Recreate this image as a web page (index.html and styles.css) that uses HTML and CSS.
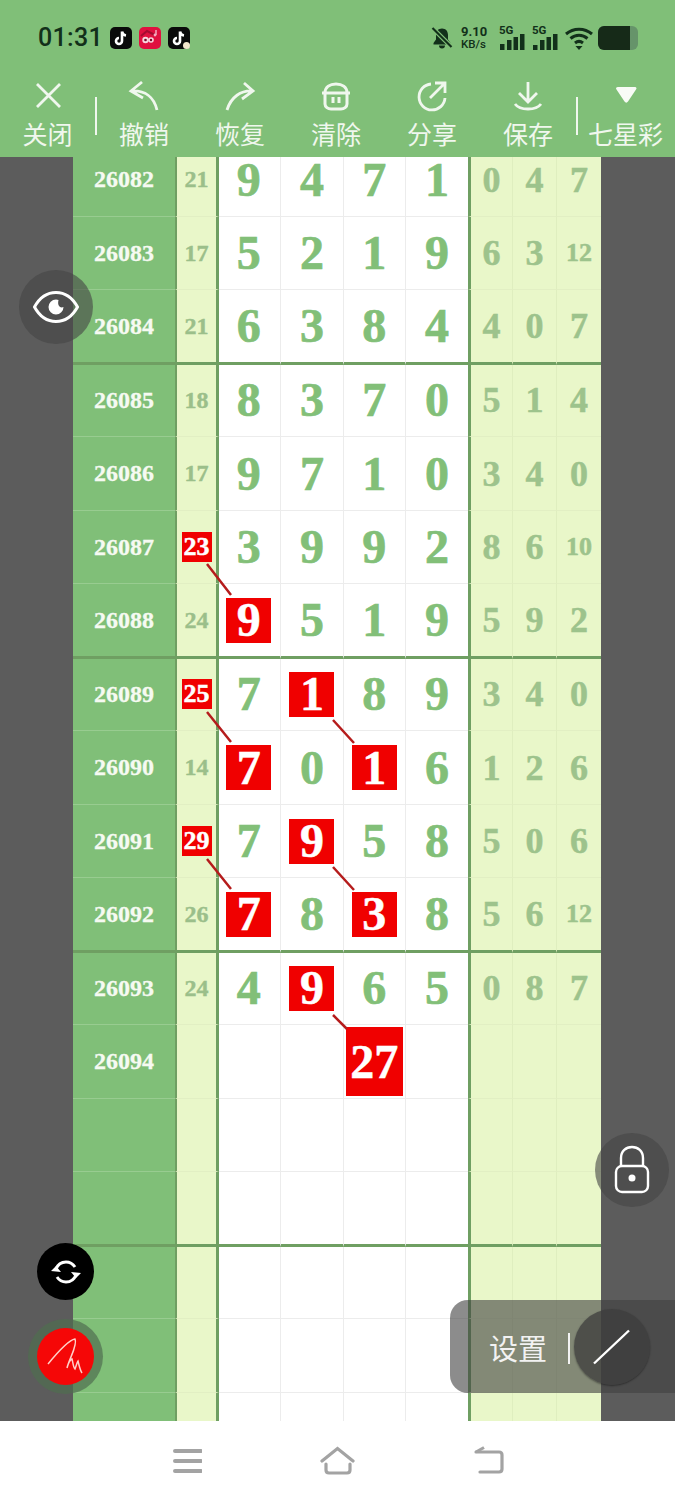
FILE: index.html
```html
<!DOCTYPE html>
<html>
<head>
<meta charset="UTF-8">
<title>七星彩</title>
<link rel="stylesheet" href="styles.css">
</head>
<body>
<div class="phone">
	<div class="statusBar">
		<div class="statusLeft">
			<span class="clock">01:31</span>
			<svg class="appIcon" viewBox="0 0 22 22"><rect width="22" height="22" rx="5" fill="#0a0a0a"/><path d="M12 4.500v9.500a3 3 0 1 1-3-3M12 4.500c.3 2.400 1.700 3.700 4 4" fill="none" stroke="#fff" stroke-width="2.600"/></svg>
			<svg class="appIcon" viewBox="0 0 22 22"><rect width="22" height="22" rx="5" fill="#e0103f"/><path d="M2 9l6-5 8 4" fill="none" stroke="#a50a30" stroke-width="2"/><circle cx="6.500" cy="13" r="3.200" fill="#f7d7de"/><circle cx="12" cy="13" r="2.800" fill="#f7d7de"/><circle cx="6.500" cy="13" r="1.300" fill="#7a0a26"/><circle cx="12" cy="13" r="1.200" fill="#7a0a26"/><path d="M17 3v5" stroke="#f3a9bd" stroke-width="1.500"/><circle cx="16" cy="8" r="1.400" fill="#f3a9bd"/></svg>
			<svg class="appIcon" viewBox="0 0 22 22"><rect width="22" height="22" rx="5" fill="#0a0a0a"/><path d="M12 4.500v9.500a3 3 0 1 1-3-3M12 4.500c.3 2.400 1.700 3.700 4 4" fill="none" stroke="#fff" stroke-width="2.600"/><circle cx="18.500" cy="18.500" r="3.500" fill="#f2e6cc"/></svg>
		</div>
		<div class="statusRight">
			<svg class="bell" viewBox="0 0 22 22"><path d="M11 1.500c-3.800 0-6 2.800-6 6.500v4.500L2.500 16v1.500h17V16L17 12.500V8c0-3.700-2.200-6.500-6-6.500zM8 18.500a3 3 0 0 0 6 0z" fill="#12301a"/><path d="M1.500 1l19 19" stroke="#80bf78" stroke-width="4.500"/><path d="M1.500 1l19 19" stroke="#12301a" stroke-width="2.200"/></svg>
			<div class="speed"><span>9.10</span><span class="unit">KB/s</span></div>
			<div class="signal">
				<span class="netName">5G</span>
				<svg viewBox="0 0 26 16"><path d="M1 10h4.500v6H1zM8 6h4.500v10H8zM14.500 3H19v13h-4.500zM21 0h4.500v16H21z" fill="#12301a"/></svg>
			</div>
			<div class="signal">
				<span class="netName">5G</span>
				<svg viewBox="0 0 26 16"><path d="M1 11h4.500v5H1zM8 6h4.500v10H8zM14.500 3H19v13h-4.500zM21 0h4.500v16H21z" fill="#12301a"/></svg>
			</div>
			<svg class="wifi" viewBox="0 0 28 24"><g fill="none" stroke="#12301a" stroke-width="3"><path d="M1 8c7.500-6.500 18.500-6.500 26 0"/><path d="M5.500 12.500c5-4.300 12-4.300 17 0"/><path d="M10 17c2.500-2 5.500-2 8 0"/></g><path d="M10.500 20h7L14 24z" fill="#12301a"/></svg>
			<div class="battery"><div class="batteryLevel"></div></div>
		</div>
	</div>

	<div class="toolbar">
		<div class="tool">
			<svg viewBox="0 0 32 32"><path d="M5 4l23 23M28 4L5 27" fill="none" stroke="#f0f7ee" stroke-width="2.800"/></svg>
			<span>关闭</span>
		</div>
		<div class="toolSep"></div>
		<div class="tool">
			<svg viewBox="0 0 32 32"><path d="M14 2L3 11l12 7M3 11c14-1 23 6 26 19" fill="none" stroke="#f0f7ee" stroke-width="2.800"/></svg>
			<span>撤销</span>
		</div>
		<div class="tool">
			<svg viewBox="0 0 32 32"><path d="M20 3l9 8-11 8M29 11C17 10 7 17 3 30" fill="none" stroke="#f0f7ee" stroke-width="2.800"/></svg>
			<span>恢复</span>
		</div>
		<div class="tool">
			<svg viewBox="0 0 32 32"><g fill="none" stroke="#f0f7ee" stroke-width="3"><path d="M5 13C5 7 10 4 16 4s11 3 11 9"/><path d="M2 13h28"/><path d="M5 13v11c0 3 3 5 6 5h10c3 0 6-2 6-5V13"/><path d="M13 17v6M19 17v6"/></g></svg>
			<span>清除</span>
		</div>
		<div class="tool">
			<svg viewBox="0 0 32 32"><g fill="none" stroke="#f0f7ee" stroke-width="2.800"><path d="M15 4a13 13 0 1 0 14 14"/><path d="M14 18L28 4M19 3h10v10"/></g></svg>
			<span>分享</span>
		</div>
		<div class="tool">
			<svg viewBox="0 0 32 32"><g fill="none" stroke="#f0f7ee" stroke-width="2.800"><path d="M16 2v19M7 13l9 9 9-9"/><path d="M3 24c3 4 8 5 13 5s10-1 13-5"/></g></svg>
			<span>保存</span>
		</div>
		<div class="toolSep lastSep"></div>
		<div class="tool">
			<svg viewBox="0 0 32 32"><path d="M8 7h17c1.500 0 2 1.500 1 2.500l-8 12c-1 1.500-2.500 1.500-3.500 0l-8-12C5.500 8.500 6 7 8 7z" fill="#f8fbf6"/></svg>
			<span>七星彩</span>
		</div>
	</div>

	<div class="sheet">
		<div class="table">
			<div class="row top"><div class="id">26082</div><div class="sum">21</div><div class="num">9</div><div class="num">4</div><div class="num">7</div><div class="num">1</div><div class="tail first">0</div><div class="tail">4</div><div class="tail">7</div></div>
			<div class="row"><div class="id">26083</div><div class="sum">17</div><div class="num">5</div><div class="num">2</div><div class="num">1</div><div class="num">9</div><div class="tail first">6</div><div class="tail">3</div><div class="tail wide">12</div></div>
			<div class="row end"><div class="id">26084</div><div class="sum">21</div><div class="num">6</div><div class="num">3</div><div class="num">8</div><div class="num">4</div><div class="tail first">4</div><div class="tail">0</div><div class="tail">7</div></div>
			<div class="row"><div class="id">26085</div><div class="sum">18</div><div class="num">8</div><div class="num">3</div><div class="num">7</div><div class="num">0</div><div class="tail first">5</div><div class="tail">1</div><div class="tail">4</div></div>
			<div class="row"><div class="id">26086</div><div class="sum">17</div><div class="num">9</div><div class="num">7</div><div class="num">1</div><div class="num">0</div><div class="tail first">3</div><div class="tail">4</div><div class="tail">0</div></div>
			<div class="row"><div class="id">26087</div><div class="sum"><b class="hitSum">23</b></div><div class="num">3</div><div class="num">9</div><div class="num">9</div><div class="num">2</div><div class="tail first">8</div><div class="tail">6</div><div class="tail wide">10</div></div>
			<div class="row end"><div class="id">26088</div><div class="sum">24</div><div class="num"><b class="hit">9</b></div><div class="num">5</div><div class="num">1</div><div class="num">9</div><div class="tail first">5</div><div class="tail">9</div><div class="tail">2</div></div>
			<div class="row"><div class="id">26089</div><div class="sum"><b class="hitSum">25</b></div><div class="num">7</div><div class="num"><b class="hit">1</b></div><div class="num">8</div><div class="num">9</div><div class="tail first">3</div><div class="tail">4</div><div class="tail">0</div></div>
			<div class="row"><div class="id">26090</div><div class="sum">14</div><div class="num"><b class="hit">7</b></div><div class="num">0</div><div class="num"><b class="hit">1</b></div><div class="num">6</div><div class="tail first">1</div><div class="tail">2</div><div class="tail">6</div></div>
			<div class="row"><div class="id">26091</div><div class="sum"><b class="hitSum">29</b></div><div class="num">7</div><div class="num"><b class="hit">9</b></div><div class="num">5</div><div class="num">8</div><div class="tail first">5</div><div class="tail">0</div><div class="tail">6</div></div>
			<div class="row end"><div class="id">26092</div><div class="sum">26</div><div class="num"><b class="hit">7</b></div><div class="num">8</div><div class="num"><b class="hit">3</b></div><div class="num">8</div><div class="tail first">5</div><div class="tail">6</div><div class="tail wide">12</div></div>
			<div class="row"><div class="id">26093</div><div class="sum">24</div><div class="num">4</div><div class="num"><b class="hit">9</b></div><div class="num">6</div><div class="num">5</div><div class="tail first">0</div><div class="tail">8</div><div class="tail">7</div></div>
			<div class="row"><div class="id">26094</div><div class="sum"></div><div class="num"></div><div class="num"></div><div class="num"><b class="hitBig">27</b></div><div class="num"></div><div class="tail first"></div><div class="tail"></div><div class="tail"></div></div>
			<div class="row"><div class="id"></div><div class="sum"></div><div class="num"></div><div class="num"></div><div class="num"></div><div class="num"></div><div class="tail first"></div><div class="tail"></div><div class="tail"></div></div>
			<div class="row end"><div class="id"></div><div class="sum"></div><div class="num"></div><div class="num"></div><div class="num"></div><div class="num"></div><div class="tail first"></div><div class="tail"></div><div class="tail"></div></div>
			<div class="row"><div class="id"></div><div class="sum"></div><div class="num"></div><div class="num"></div><div class="num"></div><div class="num"></div><div class="tail first"></div><div class="tail"></div><div class="tail"></div></div>
			<div class="row"><div class="id"></div><div class="sum"></div><div class="num"></div><div class="num"></div><div class="num"></div><div class="num"></div><div class="tail first"></div><div class="tail"></div><div class="tail"></div></div>
			<div class="row bottom"><div class="id"></div><div class="sum"></div><div class="num"></div><div class="num"></div><div class="num"></div><div class="num"></div><div class="tail first"></div><div class="tail"></div><div class="tail"></div></div>
		</div>
		<svg class="links" viewBox="0 157 675 1264">
			<path d="M207 564L231 595M207 712L231 742M333 720L354 743M207 859L231 889M333 867L354 890M333 1015L347 1029"/>
		</svg>
	</div>

	<div class="floatBtn eyeBtn">
		<svg viewBox="0 0 46 34" width="46" height="34"><path d="M1.500 17C7 7 14 2.500 23 2.500S39 7 44.500 17C39 27 32 31.500 23 31.500S7 27 1.500 17z" fill="none" stroke="#fff" stroke-width="3"/><path d="M23 9.500a7.500 7.500 0 1 0 7.500 7.500c-3 1.500-6.500-1-5-7z" fill="#fff"/></svg>
	</div>
	<div class="floatBtn lockBtn">
		<svg viewBox="0 0 36 50" width="36" height="50"><g fill="none" stroke="#fff" stroke-width="2.400"><path d="M7 21V13C7 6 12 2 18 2s11 4 11 11v8"/><rect x="2" y="21" width="32" height="26" rx="6"/></g><circle cx="18" cy="33" r="3.500" fill="#fff"/></svg>
	</div>
	<div class="syncBtn">
		<svg viewBox="0 0 32 32" width="32" height="32"><g fill="none" stroke="#fff" stroke-width="3"><path d="M6 13c2-5 6-7 10-7 4 0 7 2 9 5"/><path d="M26 19c-2 5-6 7-10 7-4 0-7-2-9-5"/></g><path d="M1 15l5-5 5 6zM31 17l-5 5-5-6z" fill="#fff"/></svg>
	</div>
	<div class="penHalo">
		<div class="penBtn">
			<svg viewBox="0 0 57 57" width="57" height="57"><path d="M11 36C20 25 31 12 38 11c3 6-6 20-8 29 1-4 3-8 5-9 1 3 1 8 3 10 1-2 2-7 3-8 1 4 2 9 4 12" fill="none" stroke="#ffd0c8" stroke-width="1.500"/></svg>
		</div>
	</div>
	<div class="settingPill">
		<span class="settingText">设置</span>
		<span class="settingSep"></span>
		<div class="lineBtn">
			<svg viewBox="0 0 40 40" width="40" height="40"><path d="M2 36.500L37 3.500" stroke="#fff" stroke-width="2.400"/></svg>
		</div>
	</div>

	<div class="navBar">
		<svg viewBox="0 0 30 30" width="30" height="30"><path d="M3 5h26M3 15h26M3 25h26" stroke="#a3a3a3" stroke-width="4" stroke-linecap="round"/></svg>
		<svg viewBox="0 0 36 30" width="36" height="30"><path d="M2 15L17.500 2.500 33 15" fill="none" stroke="#a3a3a3" stroke-width="3.200" stroke-linecap="round"/><path d="M6 18v6c0 2 1 3 3 3h18c2 0 3-1 3-3v-6" fill="none" stroke="#a3a3a3" stroke-width="3.200" stroke-linecap="round"/></svg>
		<svg viewBox="0 0 30 30" width="30" height="30"><path d="M2 6h23c2 0 3 1 3 3v14c0 2-1 3-3 3H6" fill="none" stroke="#a3a3a3" stroke-width="3.200" stroke-linecap="round"/><path d="M2 6l8-4.500" fill="none" stroke="#a3a3a3" stroke-width="3"/></svg>
	</div>
</div>
</body>
</html>
```

FILE: styles.css
```css
* {
	box-sizing: border-box;
}
body {
	margin: 0;
	font-family: "Liberation Serif", serif;
}
.phone {
	position: relative;
	width: 675px;
	height: 1500px;
	overflow: hidden;
	background: white;
}

/* status bar */
.statusBar {
	height: 75px;
	background: #80bf78;
	color: #12301a;
	display: flex;
	justify-content: space-between;
	align-items: center;
	padding: 0 37px 0 38px;
}
.statusLeft {
	display: flex;
	align-items: center;
	gap: 7px;
}
.clock {
	width: 65px;
	font-family: Roboto, sans-serif;
	font-size: 25px;
	font-weight: 500;
	letter-spacing: 0.3px;
}
.appIcon {
	width: 22px;
	height: 22px;
}
.statusRight {
	display: flex;
	align-items: center;
}
.bell {
	width: 22px;
	height: 22px;
}
.speed {
	display: flex;
	flex-direction: column;
	font-family: Roboto, sans-serif;
	font-size: 13px;
	font-weight: 700;
	line-height: 12px;
	width: 30px;
	margin-left: 8px;
}
.speed .unit {
	font-size: 11.500px;
	font-weight: 500;
}
.signal {
	position: relative;
	width: 26px;
	height: 24px;
	margin-left: 7px;
}
.speed + .signal {
	margin-left: 8px;
}
.signal svg {
	position: absolute;
	left: 0;
	bottom: 0;
	width: 26px;
	height: 16px;
}
.netName {
	position: absolute;
	left: 0;
	top: -3px;
	font-family: Roboto, sans-serif;
	font-size: 11.500px;
	font-weight: 700;
}
.wifi {
	width: 28px;
	height: 24px;
	margin-left: 7px;
}
.battery {
	width: 40px;
	height: 24px;
	margin-left: 5px;
	border-radius: 6px;
	background: #66946a;
	overflow: hidden;
}
.batteryLevel {
	width: 32px;
	height: 100%;
	background: #162a18;
}

/* toolbar */
.toolbar {
	height: 82px;
	background: #80bf78;
	display: flex;
	align-items: flex-start;
}
.tool {
	width: 96px;
	display: flex;
	flex-direction: column;
	align-items: center;
	color: #f0f7ee;
	font-family: "Noto Sans CJK SC", sans-serif;
	font-size: 25px;
	line-height: 36px;
}
.tool:first-child {
	width: 95px;
}
.tool:last-child {
	width: 97px;
}
.tool svg {
	width: 32px;
	height: 32px;
	margin: 5px 0 3px;
}
.toolSep {
	width: 2px;
	height: 38px;
	margin: 22px 0 0;
	background: #f0f7ee;
}
.toolSep + .tool {
	margin-left: -1px;
}

/* sheet */
.sheet {
	position: relative;
	z-index: 0;
	height: 1264px;
	background: #5c5c5c;
	padding-left: 73px;
}
.table {
	width: 528px;
	background: white;
}
.row {
	height: 73.500px;
	display: grid;
	grid-template-columns: 102px 44px repeat(4, 1fr) 45px 44px 44px;
}
.row > div {
	display: flex;
	align-items: center;
	justify-content: center;
	border-bottom: 1px solid #ececec;
	font-weight: bold;
}
/* first row is scrolled partly under the toolbar, last one under the nav */
.row.top {
	height: 59.800px;
}
.row.top > div {
	padding-bottom: 13px;
}
.row.bottom {
	height: 28.200px;
}
.row.bottom > div {
	border-bottom: none;
}
.row.end {
	position: relative;
	z-index: 1;
	height: 75px;
	margin-bottom: -1.500px;
}
.row.end > div {
	border-bottom: 3px solid #6f9f62;
}
.row .id {
	background: #80bf78;
	color: #f6faf2;
	font-size: 24px;
	-webkit-text-stroke: 0.3px #f6faf2;
	border-bottom-color: #98cc90;
}
.row .sum {
	background: #e9f7c9;
	color: #9bbf8a;
	font-size: 24px;
	-webkit-text-stroke: 0.4px #9bbf8a;
	border-left: 2px solid #6f9f62;
	border-right: 3px solid #6f9f62;
	border-bottom-color: #e2efc3;
}
.row .num {
	color: #82bf78;
	font-size: 48px;
	line-height: 44px;
	-webkit-text-stroke: 0.7px #82bf78;
	border-right: 1px solid #ececec;
}
.row .num:nth-child(3) {
	padding-right: 2px;
}
.row .num:nth-child(6) {
	border-right: none;
}
.row .tail {
	background: #e9f7c9;
	color: #9dc38c;
	font-size: 36px;
	-webkit-text-stroke: 0.5px #9dc38c;
	border-right: 1px solid #dfeebf;
	border-bottom-color: #e2efc3;
}
.row .tail.first {
	border-left: 3px solid #6f9f62;
}
.row .tail.wide {
	font-size: 26px;
}
.row .tail:last-child {
	border-right: none;
}
.hit, .hitSum, .hitBig {
	display: flex;
	align-items: center;
	justify-content: center;
	background: #f00000;
	color: white;
}
.row .sum b, .row .num b {
	-webkit-text-stroke: 0.5px white;
}
.hit {
	width: 45px;
	height: 45px;
}
.hitSum {
	width: 30px;
	height: 30px;
	font-size: 26px;
}
.hitBig {
	width: 57px;
	height: 69px;
}
.links {
	position: absolute;
	z-index: 2;
	left: 0;
	top: 0;
	width: 675px;
	height: 1264px;
	pointer-events: none;
}
.links path {
	fill: none;
	stroke: #b51c1c;
	stroke-width: 2.500;
}

/* floating buttons */
.floatBtn {
	position: absolute;
	width: 74px;
	height: 74px;
	border-radius: 50%;
	background: rgba(68, 68, 68, 0.6);
	display: flex;
	align-items: center;
	justify-content: center;
}
.eyeBtn {
	left: 19px;
	top: 270px;
}
.lockBtn {
	left: 595px;
	top: 1133px;
}
.syncBtn {
	position: absolute;
	left: 37px;
	top: 1243px;
	width: 57px;
	height: 57px;
	border-radius: 50%;
	background: black;
	display: flex;
	align-items: center;
	justify-content: center;
}
.penHalo {
	position: absolute;
	left: 28px;
	top: 1319px;
	width: 75px;
	height: 75px;
	border-radius: 50%;
	background: rgba(80, 110, 80, 0.7);
	display: flex;
	align-items: center;
	justify-content: center;
}
.penBtn {
	width: 57px;
	height: 57px;
	border-radius: 50%;
	background: #f50707;
}
.settingPill {
	position: absolute;
	left: 450px;
	top: 1300px;
	width: 225px;
	height: 93px;
	border-radius: 18px 0 0 18px;
	background: rgba(64, 64, 64, 0.6);
	display: flex;
	align-items: center;
	padding-left: 39px;
}
.settingText {
	color: #f2f2f2;
	font-family: "Noto Sans CJK SC", sans-serif;
	font-size: 29px;
}
.settingSep {
	width: 2px;
	height: 31px;
	margin: 4px 0 0 21px;
	background: #f2f2f2;
}
.lineBtn {
	width: 76px;
	height: 76px;
	margin-left: 4px;
	border-radius: 50%;
	background: rgba(60, 60, 60, 0.75);
	box-shadow: 0 1px 2px rgba(0, 0, 0, 0.4);
	display: flex;
	align-items: center;
	justify-content: center;
}

/* bottom nav */
.navBar {
	height: 79px;
	background: white;
	display: flex;
	align-items: center;
	justify-content: center;
	gap: 118px;
}
```
